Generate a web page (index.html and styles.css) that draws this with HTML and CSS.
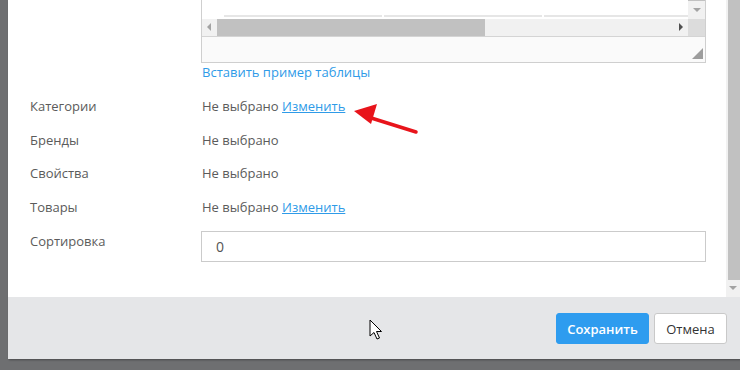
FILE: index.html
```html
<!DOCTYPE html>
<html lang="ru">
<head>
  <meta charset="UTF-8">
  <title>Раздел</title>
  <link rel="stylesheet" href="styles.css">
</head>
<body>
  <div class="modal">
    <div class="modal-body">
      <div class="content">
        <div class="row row-editor">
          <div class="label"></div>
          <div class="value">
            <div class="editor">
              <div class="editor-frame">
                <div class="editor-main">
                  <div class="editor-doc">
                    <span class="cell-line"></span>
                    <span class="cell-line"></span>
                    <span class="cell-line"></span>
                  </div>
                  <div class="hscroll">
                    <span class="arrow arrow-left"></span>
                    <div class="hscroll-track"><div class="hscroll-thumb"></div></div>
                    <span class="arrow arrow-right"></span>
                  </div>
                </div>
                <div class="vscroll">
                  <div class="vscroll-top"><span class="arrow arrow-down"></span></div>
                  <div class="corner"></div>
                </div>
              </div>
              <div class="editor-status"><span class="resize"></span></div>
            </div>
            <a href="#" class="link">Вставить пример таблицы</a>
          </div>
        </div>
        <div class="row">
          <div class="label">Категории</div>
          <div class="value">Не выбрано <a href="#" class="link underline">Изменить</a></div>
        </div>
        <div class="row">
          <div class="label">Бренды</div>
          <div class="value">Не выбрано</div>
        </div>
        <div class="row">
          <div class="label">Свойства</div>
          <div class="value">Не выбрано</div>
        </div>
        <div class="row">
          <div class="label">Товары</div>
          <div class="value">Не выбрано <a href="#" class="link underline">Изменить</a></div>
        </div>
        <div class="row row-sort">
          <div class="label">Сортировка</div>
          <div class="value"><input type="text" class="input" value="0"></div>
        </div>
      </div>
      <div class="scrollbar">
        <div class="scrollbar-thumb"></div>
        <span class="arrow arrow-down"></span>
      </div>
    </div>
    <div class="modal-footer">
      <button class="btn btn-primary">Сохранить</button>
      <button class="btn btn-default">Отмена</button>
    </div>
  </div>

  <!-- annotation arrow -->
  <svg class="pointer-arrow" width="740" height="370" viewBox="0 0 740 370">
    <line x1="416" y1="132" x2="368" y2="117" stroke="#e8141b" stroke-width="3.5" stroke-linecap="round"/>
    <polygon points="354,111 377,104 371,124" fill="#e8141b"/>
  </svg>

  <!-- mouse cursor -->
  <svg class="cursor" width="14" height="22" viewBox="0 0 14 22">
    <path d="M1 1 L1 17 L5 13.5 L8 20 L10.5 19 L7.5 12.5 L12.5 12.5 Z" fill="#fff" stroke="#000" stroke-width="1" stroke-linejoin="round"/>
  </svg>
</body>
</html>
```

FILE: styles.css
```css
* {
  margin: 0;
  padding: 0;
  box-sizing: border-box;
}
body {
  font-family: "Open Sans", Arial, sans-serif;
  font-size: 13px;
  color: #5b5b5b;
  background: #6e6f71;
  width: 740px;
  height: 370px;
  overflow: hidden;
  position: relative;
}
.modal {
  margin-left: 8px;
  width: 732px;
  height: 359px;
  background: #fff;
  box-shadow: 1px 1px 2px rgba(0, 0, 0, 0.35);
  display: flex;
  flex-direction: column;
}
.modal-body {
  display: flex;
  height: 297px;
}
.content {
  flex: 1;
  padding-left: 22px;
}
.row {
  display: flex;
  line-height: 19.5px;
  padding: 7px 0;
}
.label {
  width: 171px;
  flex-shrink: 0;
}
.value {
  width: 505px;
  padding-left: 1px;
}
.row-editor {
  padding: 0 0 9px;
}
.row-editor .value {
  padding-left: 0;
}
.row-sort {
  padding-top: 7px;
}
.row-sort .label {
  padding-top: 1px;
}
.row-sort .value {
  padding-left: 0;
}
.link {
  color: #2f9be8;
  text-decoration: none;
}
.row-editor .link {
  display: block;
  padding: 0 0 0 1px;
  line-height: 18px;
}
.underline {
  text-decoration: underline;
}

/* editor */
.editor {
  border: 1px solid #cfcfcf;
  border-top: none;
}
.editor-frame {
  display: flex;
  height: 37px;
  border-bottom: 1px solid #d4d4d4;
}
.editor-main {
  flex: 1;
  display: flex;
  flex-direction: column;
}
.editor-doc {
  height: 19px;
  display: flex;
  align-items: flex-end;
  padding: 0 0 2px 22px;
  gap: 2px;
}
.cell-line {
  height: 2px;
  background: #e6e6e6;
  flex: 158;
}
.cell-line:last-child {
  flex: 144;
}
.hscroll {
  height: 18px;
  background: #f1f1f1;
  display: flex;
  align-items: center;
}
.hscroll-track {
  flex: 1;
  height: 100%;
}
.hscroll-thumb {
  width: 268px;
  height: 100%;
  background: #c1c1c1;
}
.vscroll {
  width: 17px;
  display: flex;
  flex-direction: column;
}
.vscroll-top {
  height: 19px;
  background: #f1f1f1;
  border-top: 1px solid #c1c1c1;
  display: flex;
  justify-content: center;
  padding-top: 7px;
}
.corner {
  height: 18px;
  background: #dcdcdc;
}
.arrow {
  display: block;
  width: 0;
  height: 0;
  border-style: solid;
}
.arrow-left {
  margin: 0 6px 0 5px;
  border-width: 4px 4px 4px 0;
  border-color: transparent #a3a3a3 transparent transparent;
}
.arrow-right {
  margin: 0 5px 0 6px;
  border-width: 4px 0 4px 4px;
  border-color: transparent transparent transparent #505050;
}
.arrow-down {
  border-width: 4px 4px 0 4px;
  border-color: #a3a3a3 transparent transparent transparent;
}
.editor-status {
  height: 25px;
  background: #fafafa;
  display: flex;
  justify-content: flex-end;
  align-items: flex-end;
  padding: 0 2px 3px 0;
}
.resize {
  width: 0;
  height: 0;
  border-style: solid;
  border-width: 0 0 11px 11px;
  border-color: transparent transparent #9d9d9d transparent;
}

/* sort input */
.input {
  width: 505px;
  height: 31px;
  border: 1px solid #cbcbcb;
  padding: 0 14px;
  font-family: "Open Sans", Arial, sans-serif;
  font-size: 14px;
  color: #555;
  outline: none;
}

/* modal scrollbar */
.scrollbar {
  width: 14px;
  background: #f1f1f1;
  display: flex;
  flex-direction: column;
  align-items: center;
}
.scrollbar-thumb {
  align-self: flex-end;
  width: 12px;
  height: 280px;
  background: #c1c1c1;
}
.scrollbar .arrow-down {
  margin-top: 6px;
}

/* footer */
.modal-footer {
  flex: 1;
  background: #e5e6e8;
  display: flex;
  justify-content: flex-end;
  align-items: flex-start;
  padding: 16px 13px 0 0;
  gap: 5px;
}
.btn {
  height: 31px;
  border-radius: 3px;
  font-family: "Open Sans", Arial, sans-serif;
  font-size: 13px;
  cursor: pointer;
}
.btn-primary {
  width: 93px;
  background: #2e9cef;
  border: 1px solid #2e9cef;
  color: #fff;
  font-weight: 600;
}
.btn-default {
  width: 73px;
  background: #fff;
  border: 1px solid #c9c9c9;
  color: #333;
}

/* overlays */
.pointer-arrow {
  position: absolute;
  left: 0;
  top: 0;
}
.cursor {
  position: absolute;
  left: 369px;
  top: 319px;
}
```
